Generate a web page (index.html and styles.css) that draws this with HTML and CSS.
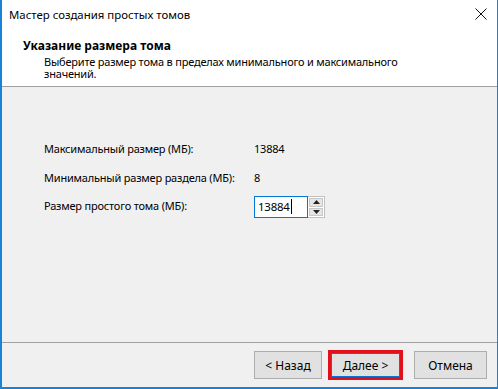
FILE: index.html
```html
<!DOCTYPE html>
<html lang="ru">

<head>
    <meta charset="UTF-8" />
    <meta name="viewport" content="width=device-width, initial-scale=1.0" />
    <title>Мастер создания простых томов</title>
    <link rel="stylesheet" href="styles.css">
</head>

<body>
    <div class="window">
        <div class="titlebar">
            <span class="title">Мастер создания простых томов</span>
            <svg class="close" width="12" height="12" viewBox="0 0 12 12">
                <path d="M0.5 0.5 L11.5 11.5 M11.5 0.5 L0.5 11.5" stroke="#111" stroke-width="1" fill="none" />
            </svg>
        </div>

        <div class="header">
            <h1>Указание размера тома</h1>
            <p>Выберите размер тома в пределах минимального и максимального значений.</p>
        </div>

        <div class="content">
            <div class="form-grid">
                <span class="label">Максимальный размер (МБ):</span>
                <span class="value">13884</span>

                <span class="label">Минимальный размер раздела (МБ):</span>
                <span class="value">8</span>

                <span class="label label-input">Размер простого тома (МБ):</span>
                <div class="spin">
                    <div class="spin-field">13884<span class="caret"></span></div>
                    <div class="spin-buttons">
                        <div class="spin-btn">
                            <svg width="7" height="4" viewBox="0 0 7 4"><path d="M3.5 0 L7 4 L0 4 Z" fill="#222" /></svg>
                        </div>
                        <div class="spin-btn">
                            <svg width="7" height="4" viewBox="0 0 7 4"><path d="M0 0 L7 0 L3.5 4 Z" fill="#222" /></svg>
                        </div>
                    </div>
                </div>
            </div>
        </div>

        <div class="footer">
            <button class="btn">&lt; Назад</button>
            <div class="highlight">
                <button class="btn btn-next">Далее &gt;</button>
            </div>
            <button class="btn btn-cancel">Отмена</button>
        </div>
    </div>
</body>

</html>
```

FILE: styles.css
```css
* {
    margin: 0;
    padding: 0;
    box-sizing: border-box;
}

body {
    font-family: 'Noto Sans', 'Open Sans', sans-serif;
    font-size: 11px;
    letter-spacing: -0.2px;
    color: #000;
    background: #fff;
}

.window {
    width: 498px;
    height: 389px;
    display: flex;
    flex-direction: column;
    border-left: 2px solid #1883d7;
    border-right: 1px solid #1883d7;
    border-bottom: 2px solid #1883d7;
    background: #f0f0f0;
}

.titlebar {
    height: 30px;
    display: flex;
    align-items: center;
    justify-content: space-between;
    padding: 0 10px 2px 7px;
    background: #fff;
}

.title {
    font-size: 11.4px;
    letter-spacing: 0;
}

.header {
    height: 57px;
    background: #fff;
    padding: 8px 0 0 21px;
    border-bottom: 1px solid #a0a0a0;
}

.header h1 {
    font-size: 12px;
    font-weight: bold;
    letter-spacing: 0;
    line-height: 16px;
}

.header p {
    width: 380px;
    margin: 2px 0 0 21px;
    line-height: 12px;
}

.content {
    flex: 1;
    padding: 54px 0 0 42px;
    border-bottom: 1px solid #a0a0a0;
}

.form-grid {
    display: grid;
    grid-template-columns: 210px auto;
    row-gap: 13px;
    align-items: center;
    line-height: 16px;
}

.label-input {
    margin-top: -6px;
}

.spin {
    display: flex;
    height: 22px;
    margin-top: -3px;
}

.spin-field {
    width: 54px;
    height: 22px;
    background: #fff;
    border: 1px solid #0078d7;
    padding: 2px 0 0 3px;
    display: flex;
    align-items: flex-start;
    font-size: 11.4px;
}

.caret {
    display: inline-block;
    width: 1px;
    height: 15px;
    background: #000;
    margin-left: 1px;
}

.spin-buttons {
    display: flex;
    flex-direction: column;
    width: 17px;
    height: 22px;
    background: #fff;
    border: 1px solid #c0c0c0;
    border-left: none;
    padding: 1px;
    gap: 1px;
}

.spin-btn {
    flex: 1;
    background: #e5e5e5;
    border: 1px solid #c8c8c8;
    display: flex;
    align-items: center;
    justify-content: center;
}

.footer {
    height: 44px;
    display: flex;
    align-items: center;
    justify-content: flex-end;
    padding: 0 10px 0 0;
    gap: 4px;
}

.btn {
    font-family: inherit;
    font-size: 12px;
    letter-spacing: 0;
    width: 68px;
    height: 28px;
    background: #e1e1e1;
    border: 1px solid #adadad;
    color: #000;
}

.highlight {
    border: 3px solid #e2101a;
    margin: 0 7px 0 2px;
}

.btn-next {
    width: 69px;
    height: 24px;
    border-color: #0078d7;
}

.btn-cancel {
    width: 73px;
}
```
